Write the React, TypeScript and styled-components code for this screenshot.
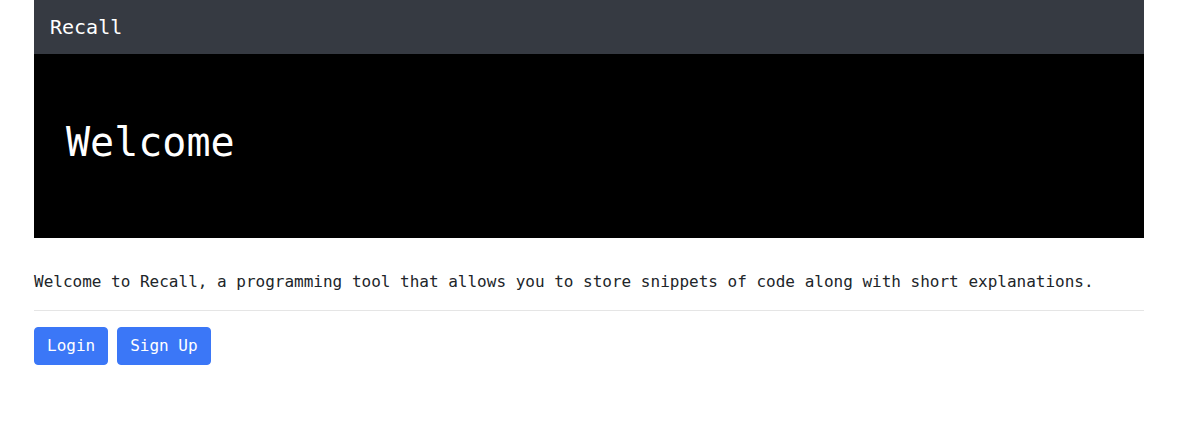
import React from "react";
import styled, { createGlobalStyle } from "styled-components";

const Global = createGlobalStyle`
  * { box-sizing: border-box; }
  body {
    margin: 0;
    background: #fff;
    color: #212529;
    font-family: "DejaVu Sans Mono", monospace;
    font-size: 16px;
    line-height: 1.5;
  }
`;

const Container = styled.div`
  width: 1110px;
  margin-left: 34px;
`;

const NavBar = styled.nav`
  height: 54px;
  background: #363a42;
  display: flex;
  align-items: center;
  padding: 0 16px;
`;

const Brand = styled.span`
  color: #fff;
  font-size: 20px;
  line-height: 30px;
`;

const Jumbotron = styled.header`
  background: #000;
  padding: 64px 32px;
  margin-bottom: 32px;
`;

const Title = styled.h1`
  margin: 0 0 8px;
  font-size: 40px;
  line-height: 48px;
  font-weight: 400;
  color: #fff;
`;

const Lead = styled.p`
  margin: 0 0 16px;
`;

const Rule = styled.hr`
  margin: 0 0 16px;
  border: 0;
  border-top: 1px solid rgba(0, 0, 0, 0.1);
`;

const Actions = styled.div`
  display: flex;
  gap: 9px;
`;

const Button = styled.button`
  font-family: "DejaVu Sans Mono", monospace;
  font-size: 16px;
  line-height: 24px;
  padding: 6px 12px;
  border: 1px solid #3b77f7;
  border-radius: 4px;
  background: #3b77f7;
  color: #fff;
  cursor: pointer;
`;

export default function App() {
  return (
    <>
      <Global />
      <Container>
        <NavBar>
          <Brand>Recall</Brand>
        </NavBar>
        <Jumbotron>
          <Title>Welcome</Title>
        </Jumbotron>
        <Lead>
          Welcome to Recall, a programming tool that allows you to store snippets of code along with short explanations.
        </Lead>
        <Rule />
        <Actions>
          <Button>Login</Button>
          <Button>Sign Up</Button>
        </Actions>
      </Container>
    </>
  );
}
